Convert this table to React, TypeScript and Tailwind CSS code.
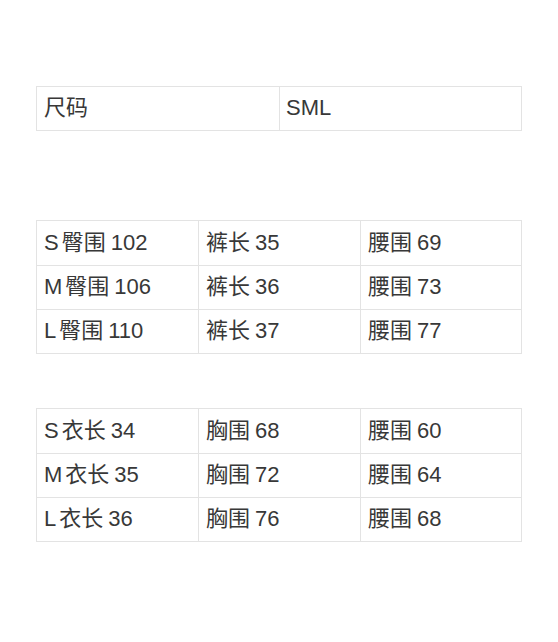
import React from "react";

function Txt({ parts }: { parts: string[] }) {
  return (
    <span className="whitespace-nowrap">
      {parts.map((p, i) => (
        <span
          key={i}
          className={i === 0 ? "" : /^\d/.test(p) ? "ml-[5px]" : "ml-[3px]"}
        >
          {p}
        </span>
      ))}
    </span>
  );
}

const t2: string[][][] = [
  [["S", "臀围", "102"], ["裤长", "35"], ["腰围", "69"]],
  [["M", "臀围", "106"], ["裤长", "36"], ["腰围", "73"]],
  [["L", "臀围", "110"], ["裤长", "37"], ["腰围", "77"]],
];

const t3: string[][][] = [
  [["S", "衣长", "34"], ["胸围", "68"], ["腰围", "60"]],
  [["M", "衣长", "35"], ["胸围", "72"], ["腰围", "64"]],
  [["L", "衣长", "36"], ["胸围", "76"], ["腰围", "68"]],
];

function Table3({ rows }: { rows: string[][][] }) {
  return (
    <div className="w-[486px] border border-[#e3e3e3] flex flex-col">
      {rows.map((r, i) => (
        <div
          key={i}
          className={
            "grid grid-cols-[161px_162px_1fr] h-[44px] " +
            (i > 0 ? "border-t border-[#e3e3e3]" : "")
          }
        >
          {r.map((c, j) => (
            <div
              key={j}
              className={
                "flex items-center pl-[7px] pb-[2px] " +
                (j > 0 ? "border-l border-[#e3e3e3]" : "")
              }
            >
              <Txt parts={c} />
            </div>
          ))}
        </div>
      ))}
    </div>
  );
}

export default function App() {
  return (
    <div
      className="w-[558px] h-[642px] bg-white pl-[36px] pt-[86px] text-[22px] text-[#383838] flex flex-col"
      style={{ fontFamily: '"Liberation Sans", "Noto Sans CJK SC", sans-serif' }}
    >
      <div className="w-[486px] h-[45px] border border-[#e3e3e3] grid grid-cols-[242px_1fr]">
        <div className="flex items-center pl-[7px] pb-[2px]">尺码</div>
        <div className="flex items-center pl-[6px] pb-[2px] border-l border-[#e3e3e3]">SML</div>
      </div>
      <div className="mt-[89px]">
        <Table3 rows={t2} />
      </div>
      <div className="mt-[54px]">
        <Table3 rows={t3} />
      </div>
    </div>
  );
}
